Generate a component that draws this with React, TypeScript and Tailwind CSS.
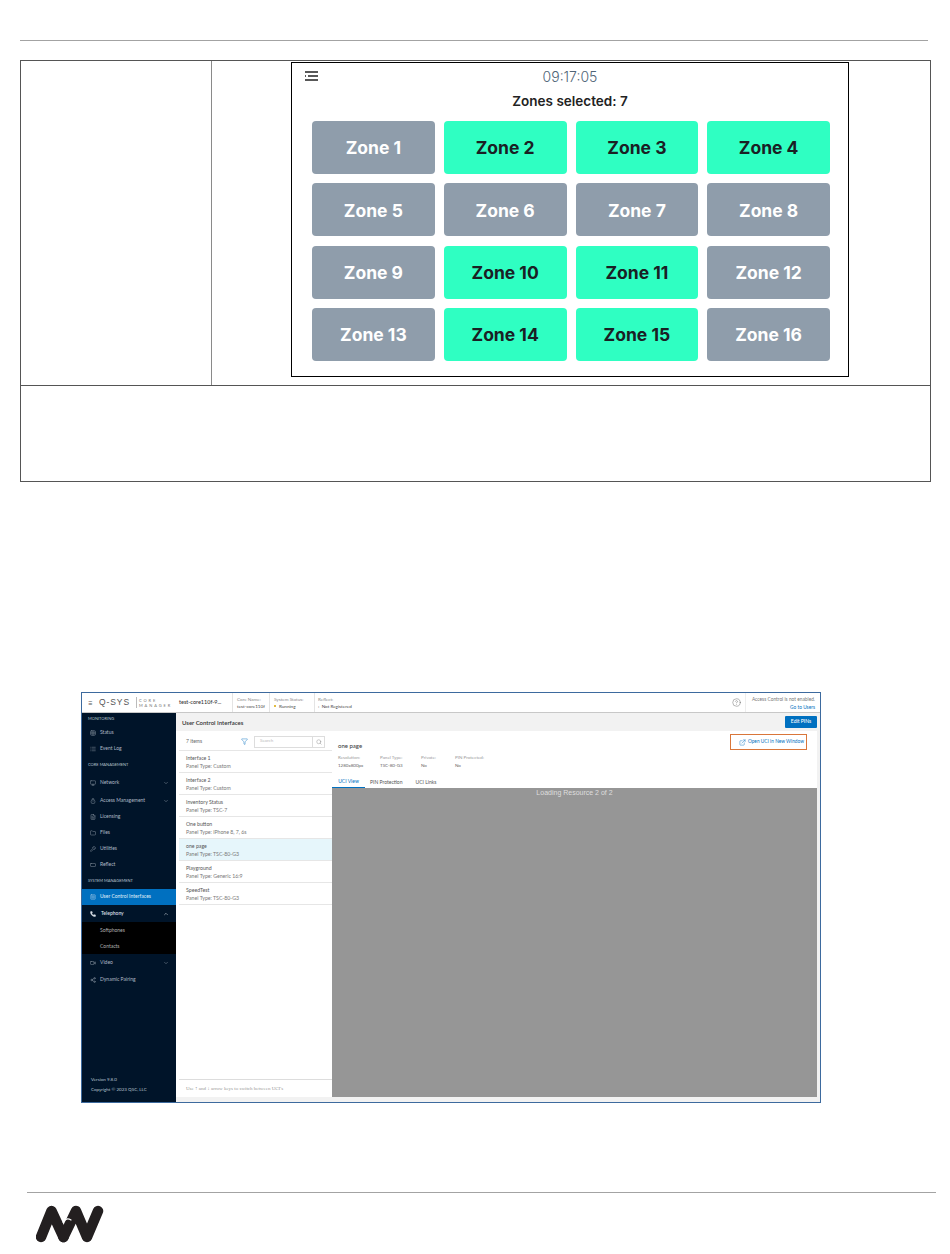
import React from 'react';
import {
  ChevronDown,
  ChevronUp,
  CircleHelp,
  ExternalLink,
  FileText,
  Filter,
  Folder,
  List,
  Monitor,
  Phone,
  RectangleHorizontal,
  Search,
  Share2,
  SquareMenu,
  Table,
  Video,
  Wrench,
} from 'lucide-react';

const zones = [
  { name: 'Zone 1', on: false },
  { name: 'Zone 2', on: true },
  { name: 'Zone 3', on: true },
  { name: 'Zone 4', on: true },
  { name: 'Zone 5', on: false },
  { name: 'Zone 6', on: false },
  { name: 'Zone 7', on: false },
  { name: 'Zone 8', on: false },
  { name: 'Zone 9', on: false },
  { name: 'Zone 10', on: true },
  { name: 'Zone 11', on: true },
  { name: 'Zone 12', on: false },
  { name: 'Zone 13', on: false },
  { name: 'Zone 14', on: true },
  { name: 'Zone 15', on: true },
  { name: 'Zone 16', on: false },
];

const interfaces = [
  { name: 'Interface 1', type: 'Custom' },
  { name: 'Interface 2', type: 'Custom' },
  { name: 'Inventory Status', type: 'TSC-7' },
  { name: 'One button', type: 'iPhone 8, 7, 6s' },
  { name: 'one page', type: 'TSC-80-G3', selected: true },
  { name: 'Playground', type: 'Generic 16:9' },
  { name: 'SpeedTest', type: 'TSC-80-G3' },
];

const specs = [
  { label: 'Resolution:', value: '1280x800px', width: 'w-[42px]' },
  { label: 'Panel Type:', value: 'TSC-80-G3', width: 'w-[41px]' },
  { label: 'Private:', value: 'No', width: 'w-[34px]' },
  { label: 'PIN Protected:', value: 'No', width: 'w-[50px]' },
];

// round lock glyph used by Access Management
const AccessIcon = ({ size = 6 }: { size?: number }) => (
  <svg width={size} height={size} viewBox="0 0 24 24" fill="none" stroke="currentColor" strokeWidth="1.5">
    <circle cx="12" cy="15" r="8" />
    <path d="M8.500 8V5a3.500 3.500 0 0 1 7 0v3M12 13v4" />
  </svg>
);

const SectionLabel = ({ text, h }: { text: string; h: string }) => (
  <div className={`${h} flex items-center pl-[6px] text-[4px] text-[#b8c4d0]`}>{text}</div>
);

const NavItem = ({
  icon: Icon,
  label,
  h = 'h-[16px] pt-[2px]',
  chevron,
}: {
  icon: React.ElementType;
  label: string;
  h?: string;
  chevron?: boolean;
}) => (
  <div className={`${h} flex items-center pl-[8px] pr-[7px] text-[#aeb9c5]`}>
    <Icon size={6} strokeWidth={1.5} />
    <span className="ml-[4px] flex-1 text-[5px]">{label}</span>
    {chevron && <ChevronDown size={6} strokeWidth={1.5} />}
  </div>
);

const Sidebar = () => (
  <div className="flex w-[94px] shrink-0 flex-col bg-[#001429]">
    <SectionLabel text="MONITORING" h="h-[11px]" />
    <NavItem icon={Table} label="Status" />
    <NavItem icon={List} label="Event Log" />
    <SectionLabel text="CORE MANAGEMENT" h="h-[18px]" />
    <NavItem icon={Monitor} label="Network" chevron />
    <NavItem icon={AccessIcon} label="Access Management" h="h-[18px] pt-[3px]" chevron />
    <NavItem icon={FileText} label="Licensing" />
    <NavItem icon={Folder} label="Files" />
    <NavItem icon={Wrench} label="Utilities" />
    <NavItem icon={RectangleHorizontal} label="Reflect" />
    <SectionLabel text="SYSTEM MANAGEMENT" h="h-[17px]" />
    <div className="flex h-[16px] items-center bg-[#0070c0] pl-[8px] text-[#dbe9f5]">
      <SquareMenu size={6} strokeWidth={1.5} />
      <span className="ml-[4px] text-[5px] font-medium">User Control Interfaces</span>
    </div>
    <div className="flex h-[17px] items-center pl-[8px] pr-[7px] text-[#d8dfe6]">
      <Phone size={6} strokeWidth={2} fill="currentColor" />
      <span className="ml-[5px] flex-1 text-[5px] font-semibold">Telephony</span>
      <ChevronUp size={6} strokeWidth={2} />
    </div>
    <div className="flex h-[16px] items-center bg-black pl-[18px] pt-[2px] text-[5px] text-[#b0b0b0]">Softphones</div>
    <div className="flex h-[16px] items-center bg-black pl-[18px] pt-[2px] text-[5px] text-[#b0b0b0]">Contacts</div>
    <NavItem icon={Video} label="Video" h="h-[17px]" chevron />
    <NavItem icon={Share2} label="Dynamic Pairing" h="h-[17px]" />
    <div className="mt-auto pb-[7px] pl-[9px] text-[4.5px] leading-[10px] text-[#b8c4d0]">
      <div>Version 9.8.0</div>
      <div>Copyright © 2023 QSC, LLC</div>
    </div>
  </div>
);

const CoreManager = () => (
  <div className="flex h-[411px] w-[740px] flex-col border border-[#3d6a9e] font-['Lato',sans-serif]">
    {/* header bar */}
    <div className="flex h-[20px] shrink-0 items-center border-b border-[#c8c8c8] bg-white text-[#555]">
      <span className="ml-[6px] w-[11px] text-[8px]">≡</span>
      <span className="w-[37px] font-['Liberation_Sans',sans-serif] text-[8.5px] tracking-[0.9px] text-[#555]">Q-SYS</span>
      <div className="flex h-[11px] w-[43px] flex-col justify-center border-l border-[#bbb] pl-[2px] text-[4px] leading-[5px] tracking-[1.9px] text-[#777]">
        <span>CORE</span>
        <span>MANAGER</span>
      </div>
      <span className="w-[53px] text-[5.5px] font-medium text-[#333]">test-core110f-9...</span>
      <div className="flex h-full w-[37px] flex-col justify-center border-l border-[#e4e4e4] pl-[4px] text-[4.6px] leading-[7px]">
        <span className="text-[#888]">Core Name:</span>
        <span className="text-[#444]">test-core110f</span>
      </div>
      <div className="flex h-full w-[45px] flex-col justify-center border-l border-[#e4e4e4] pl-[4px] text-[4.6px] leading-[7px]">
        <span className="text-[#888]">System Status:</span>
        <span className="flex items-center text-[#444]">
          <span className="mr-[3px] h-[2px] w-[2px] rounded-full bg-[#d9a400]" />
          Running
        </span>
      </div>
      <div className="flex h-full flex-col justify-center border-l border-[#e4e4e4] pl-[3px] text-[4.6px] leading-[7px]">
        <span className="text-[#888]">Reflect:</span>
        <span className="text-[#444]">‹ &nbsp;Not Registered</span>
      </div>
      <div className="ml-auto flex h-full items-center">
        <CircleHelp size={9} strokeWidth={1} className="mr-[4px] text-[#444]" />
        <div className="flex h-full w-[75px] flex-col justify-center border-l border-[#eee] pr-[5px] text-right text-[4.8px] leading-[8px]">
          <span className="text-[#777]">Access Control is not enabled.</span>
          <span className="text-[#0070c0]">Go to Users</span>
        </div>
      </div>
    </div>

    <div className="flex min-h-0 flex-1">
      <Sidebar />
      <div className="flex min-w-0 flex-1 flex-col bg-[#f2f2f2]">
        {/* page title */}
        <div className="flex h-[18px] shrink-0 items-center justify-between pl-[6px] pr-[3px]">
          <span className="text-[6px] font-semibold text-[#333]">User Control Interfaces</span>
          <span className="flex h-[12px] w-[32px] items-center justify-center rounded-[1px] bg-[#0070c0] text-[5px] font-medium text-white">Edit PINs</span>
        </div>

        <div className="flex min-h-0 flex-1 pb-[5px] pr-[3px]">
          {/* list column */}
          <div className="flex w-[156px] shrink-0 flex-col bg-white pl-[3px]">
            <div className="flex h-[20px] shrink-0 items-center border-b border-[#e6e6e6] pl-[7px] pr-[7px] pt-[2px]">
              <span className="text-[5px] text-[#666]">7 items</span>
              <Filter size={7} strokeWidth={1.5} className="ml-auto text-[#0070c0]" />
              <div className="ml-[6px] flex h-[12px] w-[71px] items-center justify-between border border-[#ddd] pl-[5px]">
                <span className="text-[4.5px] text-[#bbb]">Search</span>
                <span className="flex h-full w-[12px] items-center justify-center border-l border-[#ddd]">
                  <Search size={6} strokeWidth={1.5} className="text-[#777]" />
                </span>
              </div>
            </div>
            {interfaces.map(i => (
              <div
                key={i.name}
                className={`flex h-[22px] shrink-0 flex-col justify-center border-b border-[#e6e6e6] pl-[7px] text-[5.2px] leading-[8px] ${i.selected ? 'bg-[#e6f6fb]' : 'bg-white'}`}
              >
                <span className="text-[#555]">{i.name}</span>
                <span className="text-[#777]">Panel Type: {i.type}</span>
              </div>
            ))}
            <div className="mt-auto flex h-[18px] shrink-0 items-center border-t border-[#ddd] pl-[7px] font-['Liberation_Serif',serif] text-[5px] text-[#999]">
              Use ↑ and ↓ arrow keys to switch between UCI's
            </div>
          </div>

          {/* detail column */}
          <div className="flex min-w-0 flex-1 flex-col bg-white">
            <div className="flex shrink-0 justify-between pl-[6px] pr-[10px]">
              <span className="mt-[10px] text-[6px] font-medium text-[#444]">one page</span>
              <div className="mt-[3px] flex h-[16px] w-[77px] items-center justify-end border border-[#d9763a] pr-[2px] text-[#0070c0]">
                <ExternalLink size={7} strokeWidth={1.5} />
                <span className="ml-[2px] text-[4.8px]">Open UCI in New Window</span>
              </div>
            </div>
            <div className="mt-[4px] flex shrink-0 pl-[6px] text-[4.5px] leading-[8px]">
              {specs.map(s => (
                <div key={s.label} className={`flex flex-col ${s.width}`}>
                  <span className="text-[#999]">{s.label}</span>
                  <span className="text-[#666]">{s.value}</span>
                </div>
              ))}
            </div>
            <div className="mt-[5px] flex h-[13px] shrink-0 items-end pb-[2px] text-[5px] leading-[8px] text-[#555]">
              <span className="-mb-[2px] flex w-[33px] justify-center border-b border-[#0070c0] pb-[2px] text-[#0070c0]">UCI View</span>
              <span className="ml-[5px]">PIN Protection</span>
              <span className="ml-[13px]">UCI Links</span>
            </div>
            <div className="flex min-h-0 flex-1 justify-center bg-[#969696] font-['Liberation_Sans',sans-serif] text-[7px] leading-[9px] text-[#dedede]">
              Loading Resource 2 of 2
            </div>
          </div>
        </div>
      </div>
    </div>
  </div>
);

const App: React.FC = () => {
  return (
    <div className="h-[1254px] w-[950px] overflow-hidden bg-white pt-[40px]">
      <div className="ml-[20px] h-px w-[908px] bg-[#a3a3a3]" />

      <div className="ml-[20px] mt-[19px] w-[911px] border border-[#555]">
        <div className="flex h-[325px] border-b border-[#555]">
          <div className="w-[191px] shrink-0 border-r border-[#8a8a8a]" />
          <div className="flex-1 pl-[79px] pt-px">
            <div className="flex h-[315px] w-[558px] flex-col border border-black font-['Inter',sans-serif]">
              <div className="relative flex h-[26px] shrink-0 items-center justify-center">
                <svg className="absolute left-[12px] top-[8px]" width="15" height="10" viewBox="0 0 15 10" fill="none" stroke="#222" strokeWidth="1.3">
                  <path d="M1 1h13M4 5h10M1 9h13M1 5h1" />
                </svg>
                <span className="text-[14px] font-light text-[#4f6577]">09:17:05</span>
              </div>
              <div className="mt-[2px] text-center text-[13.5px] font-semibold leading-[20px] text-[#222]">Zones selected: 7</div>
              <div className="ml-[20px] mt-[10px] grid w-[518px] grid-cols-4 gap-x-[9px] gap-y-[9.33px]">
                {zones.map(z => (
                  <div
                    key={z.name}
                    className={`flex h-[53px] items-center justify-center rounded-[4px] pt-[2px] text-[17.5px] font-bold ${z.on ? 'bg-[#2fffc2] text-[#1a2024]' : 'bg-[#8f9dab] text-white'}`}
                  >
                    {z.name}
                  </div>
                ))}
              </div>
            </div>
          </div>
        </div>
        <div className="h-[95px]" />
      </div>

      <div className="ml-[81px] mt-[210px]">
        <CoreManager />
      </div>

      <div className="ml-[27px] mt-[89px] h-px w-[909px] bg-[#a3a3a3]" />
      <div className="ml-[36px] mt-[12px]">
        <svg width="68" height="40" viewBox="0 0 68 40" fill="none">
          <path d="M5 32 15.500 6 27.500 32" stroke="#231f20" strokeWidth="10.500" strokeLinecap="round" strokeLinejoin="round" />
          <path d="M27.500 32 40 6 51 32 62 6" stroke="#231f20" strokeWidth="10.500" strokeLinecap="round" strokeLinejoin="round" />
          <path d="M27 17c2-3 5-4 8-2" stroke="#fff" strokeWidth="1.200" strokeLinecap="round" />
        </svg>
      </div>
    </div>
  );
};

export default App;
